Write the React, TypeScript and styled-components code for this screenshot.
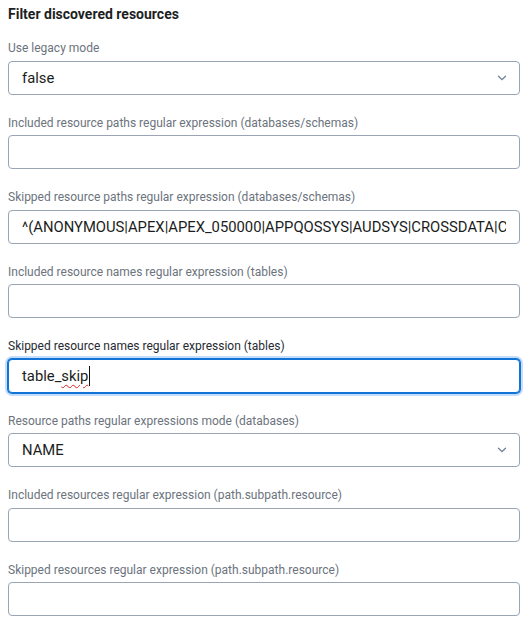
import { ReactElement } from 'react'
import styled, { createGlobalStyle, css } from 'styled-components'

const GlobalStyle = createGlobalStyle`
  html, body {
    margin: 0;
    padding: 0;
    background: #ffffff;
  }
  body {
    font-family: Roboto, "Liberation Sans", sans-serif;
  }
`

const SPanel = styled.div`
  width: 512px;
  padding: 4px 10px 0 8px;
  display: flex;
  flex-direction: column;
`

const STitle = styled.h3`
  margin: 0 0 17px;
  font-size: 14px;
  line-height: 20px;
  font-weight: 700;
  color: #1d1f24;
`

const SField = styled.div`
  display: flex;
  flex-direction: column;
  gap: 5px;
  margin-bottom: 21px;
`

interface IFocusProps {
  focused?: boolean
}

const SLabel = styled.label<IFocusProps>`
  font-size: 12px;
  line-height: 14.5px;
  color: ${({ focused }): string => (focused ? '#262a31' : '#6c737d')};
  white-space: nowrap;
`

const boxStyle = css<IFocusProps>`
  box-sizing: border-box;
  width: 100%;
  height: 34px;
  border-radius: 4px;
  background: #ffffff;
  font-family: Roboto, "Liberation Sans", sans-serif;
  font-size: 14.8px;
  color: #1b1d21;
  padding: 0 13px;
  border: 1px solid ${({ focused }): string => (focused ? '#1273d6' : '#9aa5b4')};
  box-shadow: ${({ focused }): string => (focused ? '0 0 0 1px #1273d6, 0 0 0 3px #c4defb' : 'none')};
  outline: none;
`

const SInput = styled.input<IFocusProps>`
  ${boxStyle}
  text-overflow: clip;
`

const SFakeInput = styled.div<IFocusProps>`
  ${boxStyle}
  display: flex;
  align-items: center;
`

const SMisspelled = styled.span`
  text-decoration: underline wavy #e0201a;
  text-decoration-thickness: 1px;
  text-underline-offset: 3px;
`

const SCaret = styled.span`
  display: inline-block;
  width: 1px;
  height: 20px;
  background: #111;
  margin-left: 1px;
`

const SSelect = styled.div`
  ${boxStyle}
  display: flex;
  align-items: center;
  justify-content: space-between;
  padding-right: 12px;
`

const SChevron = styled.svg`
  width: 10px;
  height: 6px;
  color: #6f8198;
`

function Chevron(): ReactElement {
  return (
    <SChevron viewBox="0 0 10 6" fill="none">
      <path d="M1.5 1.2 L5 4.6 L8.5 1.2" stroke="currentColor" strokeWidth="1.3" strokeLinecap="round" />
    </SChevron>
  )
}

interface IFieldDef {
  label: string
  kind: 'select' | 'input' | 'focused'
  value?: string
}

const fields: IFieldDef[] = [
  { label: 'Use legacy mode', kind: 'select', value: 'false' },
  { label: 'Included resource paths regular expression (databases/schemas)', kind: 'input' },
  {
    label: 'Skipped resource paths regular expression (databases/schemas)',
    kind: 'input',
    value: '^(ANONYMOUS|APEX|APEX_050000|APPQOSSYS|AUDSYS|CROSSDATA|CTXSYS|DBSNMP)$',
  },
  { label: 'Included resource names regular expression (tables)', kind: 'input' },
  { label: 'Skipped resource names regular expression (tables)', kind: 'focused' },
  { label: 'Resource paths regular expressions mode (databases)', kind: 'select', value: 'NAME' },
  { label: 'Included resources regular expression (path.subpath.resource)', kind: 'input' },
  { label: 'Skipped resources regular expression (path.subpath.resource)', kind: 'input' },
]

function App(): ReactElement {
  return (
    <>
      <GlobalStyle />
      <SPanel>
        <STitle>Filter discovered resources</STitle>
        {fields.map((f) => (
          <SField key={f.label}>
            <SLabel focused={f.kind === 'focused'}>{f.label}</SLabel>
            {f.kind === 'select' && (
              <SSelect>
                <span>{f.value}</span>
                <Chevron />
              </SSelect>
            )}
            {f.kind === 'input' && <SInput readOnly value={f.value ?? ''} />}
            {f.kind === 'focused' && (
              <SFakeInput focused>
                <span>table_</span>
                <SMisspelled>skip</SMisspelled>
                <SCaret />
              </SFakeInput>
            )}
          </SField>
        ))}
      </SPanel>
    </>
  )
}

export default App
